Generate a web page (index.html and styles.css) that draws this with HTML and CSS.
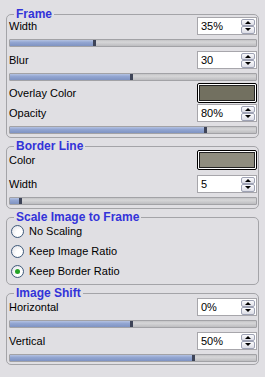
FILE: index.html
```html
<!DOCTYPE html>
<html lang="en">
<head>
    <meta charset="UTF-8">
    <title>Frame settings</title>
    <link rel="stylesheet" href="styles.css">
</head>
<body>
    <div class="panel">
        <section class="group">
            <h2 class="group-title">Frame</h2>
            <div class="row mt2">
                <span class="label">Width</span>
                <div class="spin"><span class="spin-value">35%</span><span class="spin-btns"><i class="up"></i><i class="down"></i></span></div>
            </div>
            <div class="slider"><div class="fill" style="width:35%"></div></div>
            <div class="row">
                <span class="label">Blur</span>
                <div class="spin"><span class="spin-value">30</span><span class="spin-btns"><i class="up"></i><i class="down"></i></span></div>
            </div>
            <div class="slider"><div class="fill" style="width:50%"></div></div>
            <div class="row color-row mt2">
                <span class="label">Overlay Color</span>
                <div class="swatch"><div class="swatch-fill" style="background:#727060"></div></div>
            </div>
            <div class="row mt1">
                <span class="label">Opacity</span>
                <div class="spin"><span class="spin-value">80%</span><span class="spin-btns"><i class="up"></i><i class="down"></i></span></div>
            </div>
            <div class="slider"><div class="fill" style="width:80%"></div></div>
        </section>

        <section class="group">
            <h2 class="group-title">Border Line</h2>
            <div class="row color-row mt3">
                <span class="label">Color</span>
                <div class="swatch"><div class="swatch-fill" style="background:#8f8d7f"></div></div>
            </div>
            <div class="row mt5">
                <span class="label">Width</span>
                <div class="spin"><span class="spin-value">5</span><span class="spin-btns"><i class="up"></i><i class="down"></i></span></div>
            </div>
            <div class="slider"><div class="fill" style="width:5%"></div></div>
        </section>

        <section class="group">
            <h2 class="group-title">Scale Image to Frame</h2>
            <label class="radio-row mt3"><span class="radio"></span>No Scaling</label>
            <label class="radio-row"><span class="radio"></span>Keep Image Ratio</label>
            <label class="radio-row"><span class="radio checked"></span>Keep Border Ratio</label>
        </section>

        <section class="group last">
            <h2 class="group-title">Image Shift</h2>
            <div class="row">
                <span class="label">Horizontal</span>
                <div class="spin"><span class="spin-value">0%</span><span class="spin-btns"><i class="up"></i><i class="down"></i></span></div>
            </div>
            <div class="slider mt5"><div class="fill" style="width:50%"></div></div>
            <div class="row">
                <span class="label">Vertical</span>
                <div class="spin"><span class="spin-value">50%</span><span class="spin-btns"><i class="up"></i><i class="down"></i></span></div>
            </div>
            <div class="slider mt3"><div class="fill" style="width:75%"></div></div>
        </section>
    </div>
</body>
</html>
```

FILE: styles.css
```css
*{
    margin:0;
    padding:0;
    box-sizing:border-box;
}
html,body{
    background:#e0dfe3;
}
body{
    font-family:"Liberation Sans", Arial, sans-serif;
    font-size:11px;
    color:#000;
    width:265px;
    height:377px;
    overflow:hidden;
}
.panel{
    padding:14px 0 0 6px;
}
.group{
    width:253px;
    border:1px solid #a4a4a8;
    border-radius:5px;
    padding:0 1px 3px 2px;
    margin-bottom:8px;
}
.group + .group{
    margin-top:1px;
}
.group.last{
    margin-top:2px;
    padding-bottom:2px;
}
.group-title{
    width:max-content;
    margin:-8px 0 -6px 5px;
    padding:0 2px;
    background:#e0dfe3;
    font-family:"Liberation Sans", Arial, sans-serif;
    font-weight:bold;
    font-size:12px;
    line-height:14px;
    color:#3333d9;
}
.row{
    display:flex;
    align-items:center;
    justify-content:space-between;
    height:18px;
    margin-top:4px;
}
.color-row{
    height:20px;
}
.mt1{ margin-top:1px; }
.mt2{ margin-top:2px; }
.mt3{ margin-top:3px; }
.mt5{ margin-top:5px; }
.label{
    line-height:13px;
}
.spin{
    display:flex;
    align-items:center;
    justify-content:space-between;
    width:60px;
    height:18px;
    background:#fff;
    border:1px solid #a7a6ab;
    padding:0 1px 0 3px;
}
.spin-value{
    line-height:13px;
}
.spin-btns{
    display:flex;
    flex-direction:column;
    width:14px;
    height:15px;
}
.spin-btns i{
    flex:1;
    display:flex;
    align-items:center;
    justify-content:center;
    border:1px solid #9ea2b4;
    border-radius:2px;
    background:linear-gradient(#fbfbfd,#dcdde6);
}
.spin-btns i::after{
    content:"";
    border-left:3px solid transparent;
    border-right:3px solid transparent;
}
.spin-btns .up::after{
    border-bottom:3px solid #000;
}
.spin-btns .down::after{
    border-top:3px solid #000;
}
.slider{
    height:8px;
    margin-top:4px;
    border:1px solid #a2a2a6;
    border-radius:1px;
    background:linear-gradient(#c4c4c6,#d6d6d8 35%,#bdbdc0);
    overflow:hidden;
}
.fill{
    height:100%;
    background:linear-gradient(#b4c2e2,#93a6d2 40%,#7f93c2);
    border-right:3px solid #3e4458;
}
.swatch{
    width:60px;
    height:20px;
    border:1px solid #000;
    border-radius:2px;
    padding:1px;
    background:#fff;
}
.swatch-fill{
    height:100%;
    border:1px solid #222;
}
.radio-row{
    display:flex;
    align-items:center;
    gap:5px;
    height:20px;
    padding-left:2px;
}
.radio{
    width:13px;
    height:13px;
    border:1px solid #3f5a7a;
    border-radius:50%;
    background:radial-gradient(circle at 65% 65%,#fff 30%,#dcdce2);
    display:flex;
    align-items:center;
    justify-content:center;
}
.radio.checked::after{
    content:"";
    width:5px;
    height:5px;
    border-radius:50%;
    background:#25a325;
}
```
